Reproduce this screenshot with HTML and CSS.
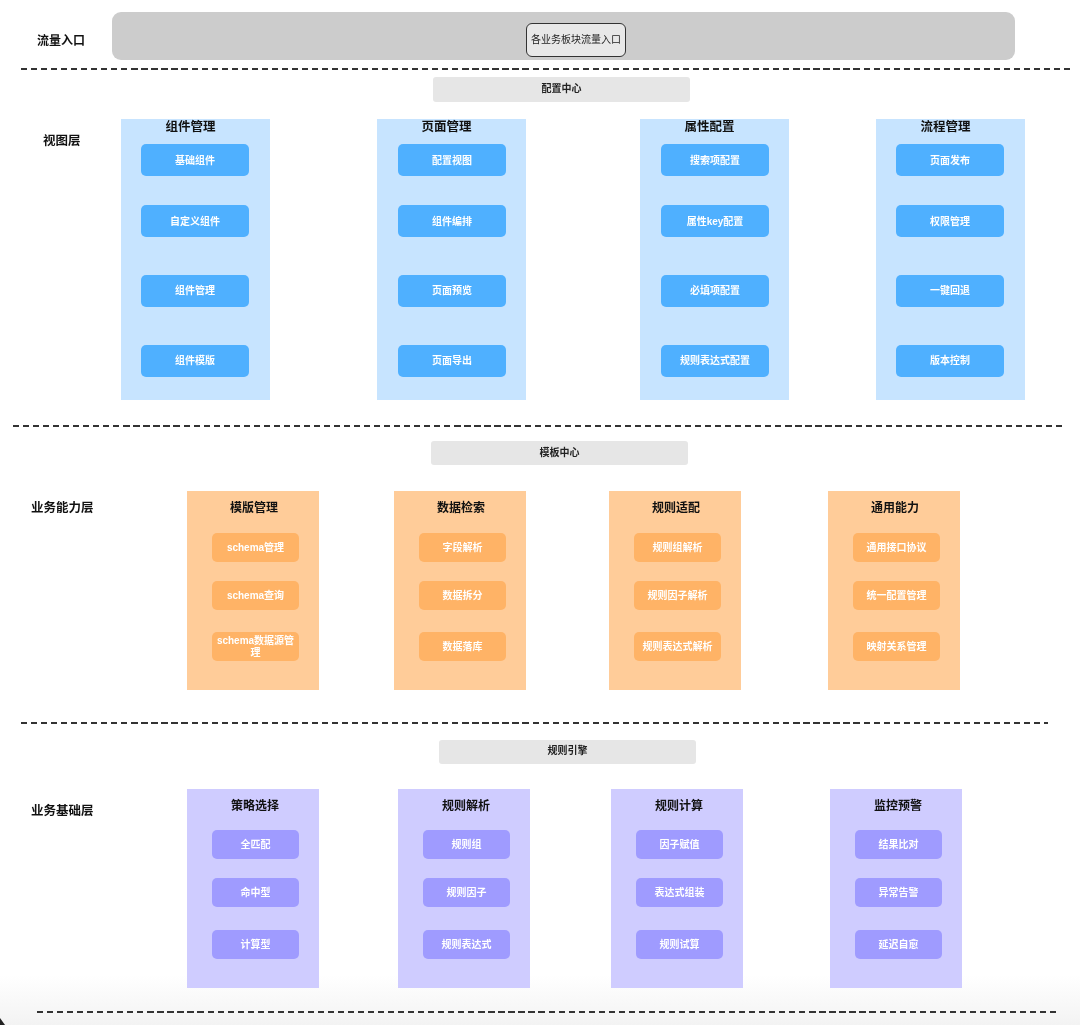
FILE: index.html
```html
<!DOCTYPE html>
<html lang="zh-CN">
<head>
<meta charset="utf-8">
<title>架构图</title>
<link rel="stylesheet" href="styles.css">
</head>
<body>
<main class="page">
  <section class="entry">
    <div class="entry-label">流量入口</div>
    <div class="entry-bar"><div class="entry-button">各业务板块流量入口</div></div>
  </section>
  <div class="divider divider-1"></div>

  <div class="center-head head-1">配置中心</div>
  <section class="layer layer-view">
    <div class="layer-label">视图层</div>
    <div class="columns">
      <div class="col"><h3>组件管理</h3><ul><li>基础组件</li><li>自定义组件</li><li>组件管理</li><li>组件模版</li></ul></div>
      <div class="col"><h3>页面管理</h3><ul><li>配置视图</li><li>组件编排</li><li>页面预览</li><li>页面导出</li></ul></div>
      <div class="col"><h3>属性配置</h3><ul><li>搜索项配置</li><li>属性key配置</li><li>必填项配置</li><li>规则表达式配置</li></ul></div>
      <div class="col"><h3>流程管理</h3><ul><li>页面发布</li><li>权限管理</li><li>一键回退</li><li>版本控制</li></ul></div>
    </div>
  </section>
  <div class="divider divider-2"></div>

  <div class="center-head head-2">模板中心</div>
  <section class="layer layer-biz">
    <div class="layer-label">业务能力层</div>
    <div class="columns">
      <div class="col"><h3>模版管理</h3><ul><li>schema管理</li><li>schema查询</li><li>schema数据源管理</li></ul></div>
      <div class="col"><h3>数据检索</h3><ul><li>字段解析</li><li>数据拆分</li><li>数据落库</li></ul></div>
      <div class="col"><h3>规则适配</h3><ul><li>规则组解析</li><li>规则因子解析</li><li>规则表达式解析</li></ul></div>
      <div class="col"><h3>通用能力</h3><ul><li>通用接口协议</li><li>统一配置管理</li><li>映射关系管理</li></ul></div>
    </div>
  </section>
  <div class="divider divider-3"></div>

  <div class="center-head head-3">规则引擎</div>
  <section class="layer layer-base">
    <div class="layer-label">业务基础层</div>
    <div class="columns">
      <div class="col"><h3>策略选择</h3><ul><li>全匹配</li><li>命中型</li><li>计算型</li></ul></div>
      <div class="col"><h3>规则解析</h3><ul><li>规则组</li><li>规则因子</li><li>规则表达式</li></ul></div>
      <div class="col"><h3>规则计算</h3><ul><li>因子赋值</li><li>表达式组装</li><li>规则试算</li></ul></div>
      <div class="col"><h3>监控预警</h3><ul><li>结果比对</li><li>异常告警</li><li>延迟自愈</li></ul></div>
    </div>
  </section>
  <div class="divider divider-4"></div>
</main>
</body>
</html>
```
FILE: styles.css
```css
* { box-sizing: border-box; }
html, body { margin: 0; padding: 0; }
body {
  width: 1080px;
  height: 1025px;
  overflow: hidden;
  position: relative;
  background: linear-gradient(to bottom, #fff 0, #fff 975px, #f3f3f3 1025px);
  font-family: "Liberation Sans", "Noto Sans CJK SC", sans-serif;
  color: #111;
}
body::after {
  content: "";
  position: absolute;
  left: 0;
  bottom: 0;
  border-left: 5px solid #222;
  border-top: 7px solid transparent;
}
.page { filter: blur(0.5px); }

/* entry row */
.entry { display: flex; padding-top: 12px; }
.entry-label {
  width: 112px;
  padding: 21px 0 0 37px;
  font-size: 12px;
  line-height: 16px;
  font-weight: 700;
}
.entry-bar {
  width: 903px;
  height: 48px;
  padding: 11px 0 0 414px;
  background: #ccc;
  border-radius: 9px;
}
.entry-button {
  width: 100px;
  height: 34px;
  background: #e8e8e8;
  border: 1px solid #333;
  border-radius: 6px;
  font-size: 10px;
  line-height: 32px;
  text-align: center;
  white-space: nowrap;
  color: #222;
}

/* dashed dividers */
.divider {
  height: 2px;
  background: repeating-linear-gradient(to right, #333 0, #333 6.2px, transparent 6.2px, transparent 10.03px);
}
.divider-1 { margin: 8px 0 0 21px; width: 1049px; }
.divider-2 { margin: 25px 0 0 13px; width: 1049px; }
.divider-3 { margin: 32px 0 0 21px; width: 1027px; }
.divider-4 { margin: 23px 0 0 37px; width: 1020px; }

/* section headings */
.center-head {
  width: 257px;
  background: #e6e6e6;
  border-radius: 3px;
  font-size: 10px;
  font-weight: 700;
  text-align: center;
  color: #222;
}
.head-1 { margin: 7px 0 0 433px; height: 25px; line-height: 23px; }
.head-2 { margin: 14px 0 0 431px; height: 24px; line-height: 24px; }
.head-3 { margin: 16px 0 0 439px; height: 24px; line-height: 22px; }

/* layers */
.layer { display: flex; }
.layer-label { font-size: 12.5px; line-height: 16px; font-weight: 700; }
.columns { display: grid; }
.col { height: 100%; }
.col h3 {
  margin: 0;
  font-size: 12px;
  line-height: 16px;
  font-weight: 700;
  text-align: center;
}
.col ul { list-style: none; margin: 0; padding: 0; display: grid; }
.col li {
  display: flex;
  align-items: center;
  justify-content: center;
  border-radius: 5px;
  font-size: 10px;
  line-height: 12px;
  font-weight: 700;
  color: #fff;
  text-align: center;
  padding: 0 4px;
}

/* view layer */
.layer-view { margin-top: 17px; height: 281px; }
.layer-view .layer-label { width: 121px; padding: 14px 0 0 43px; }
.layer-view .columns { grid-template-columns: 256px 263px 236px 149px; }
.layer-view .col { width: 149px; background: #c7e4ff; }
.layer-view h3 { font-size: 12.5px; padding: 0 10px 0 0; height: 25px; }
.layer-view ul { width: 108px; margin-left: 20px; grid-template-rows: 32px 32px 32px 32px; row-gap: 29px; }
.layer-view .col:nth-child(2) ul, .layer-view .col:nth-child(3) ul { margin-left: 21px; }
.layer-view li { background: #4fb0ff; height: 32px; }
.layer-view li:nth-child(-n+2) { padding-top: 1px; }
.layer-view li:nth-child(n+3) { position: relative; top: 9px; }
.layer-view li:nth-child(n+4) { top: 18px; }

/* business layers */
.layer-biz, .layer-base { height: 199px; }
.layer-biz { margin-top: 26px; }
.layer-base { margin-top: 25px; }
.layer-biz .layer-label { width: 187px; padding: 9px 0 0 31px; }
.layer-base .layer-label { width: 187px; padding: 14px 0 0 31px; }
.layer-biz .columns { grid-template-columns: 207px 215px 219px 132px; }
.layer-base .columns { grid-template-columns: 211px 213px 219px 132px; }
.layer-biz .col, .layer-base .col { width: 132px; padding-top: 9px; }
.layer-biz .col { background: #fc9; }
.layer-base .col { background: #cfccff; }
.layer-biz h3, .layer-base h3 { height: 16px; }
.layer-biz h3 { padding-left: 2px; }
.layer-base h3 { padding-left: 4px; }
.layer-biz ul, .layer-base ul { width: 87px; margin: 17px 0 0 25px; }
.layer-base ul { margin-top: 16px; }
.layer-biz ul { grid-template-rows: 29px 29px 29px; row-gap: 19px; }
.layer-base ul { grid-template-rows: 29px 29px 29px; row-gap: 19px; }
.layer-biz li { background: #ffb366; }
.layer-base li { background: #9f9bff; }
.layer-biz li:last-child { position: relative; top: 3px; }
.layer-base li:last-child { position: relative; top: 4px; }
```
